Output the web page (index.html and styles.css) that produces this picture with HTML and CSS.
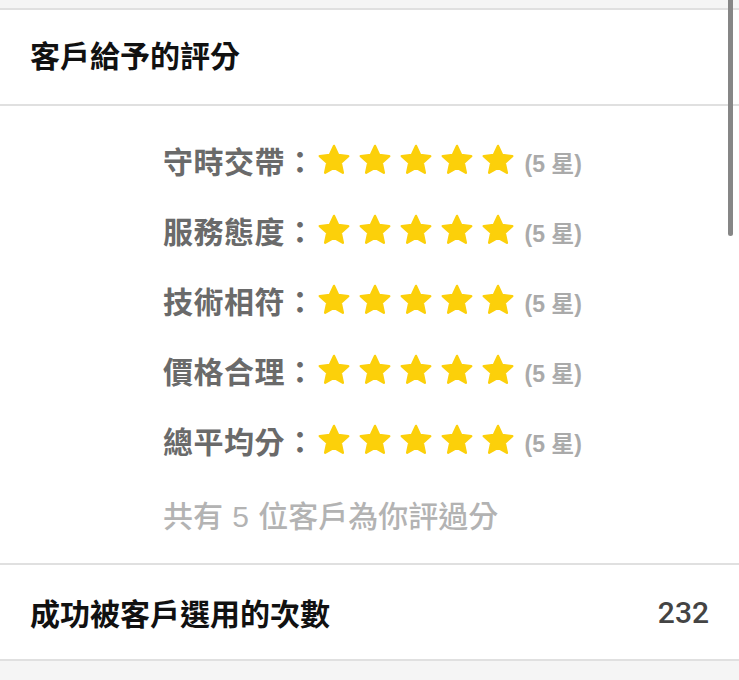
FILE: index.html
```html
<!DOCTYPE html>
<html lang="zh-Hant">

<head>
    <title>
        客戶評分
    </title>
    <link rel="stylesheet" href="styles.css">
</head>

<body>
    <div class="scrollbar"></div>

    <div class="section">
        <div class="section-title">客戶給予的評分</div>
        <div class="rating-body">
            <div class="rating-row">
                <span class="rating-label">守時交帶：</span>
                <span class="stars" data-stars="5"></span>
                <span class="rating-count">(5 星)</span>
            </div>
            <div class="rating-row">
                <span class="rating-label">服務態度：</span>
                <span class="stars" data-stars="5"></span>
                <span class="rating-count">(5 星)</span>
            </div>
            <div class="rating-row">
                <span class="rating-label">技術相符：</span>
                <span class="stars" data-stars="5"></span>
                <span class="rating-count">(5 星)</span>
            </div>
            <div class="rating-row">
                <span class="rating-label">價格合理：</span>
                <span class="stars" data-stars="5"></span>
                <span class="rating-count">(5 星)</span>
            </div>
            <div class="rating-row">
                <span class="rating-label">總平均分：</span>
                <span class="stars" data-stars="5"></span>
                <span class="rating-count">(5 星)</span>
            </div>
            <div class="rating-note">共有 5 位客戶為你評過分</div>
        </div>
    </div>

    <div class="section">
        <div class="stat-row">
            <span class="stat-label">成功被客戶選用的次數</span>
            <span class="stat-value">232</span>
        </div>
    </div>

    <script>
        var starSvg = '<svg class="star" viewBox="0 0 24 24"><path d="M12 2.6l2.8 6.1 6.7.7-5 4.5 1.4 6.6L12 17.1l-5.9 3.4 1.4-6.6-5-4.5 6.7-.7z"/></svg>';
        var lists = document.getElementsByClassName("stars");
        for (var i = 0; i < lists.length; i++) {
            var n = parseInt(lists[i].getAttribute("data-stars"));
            var html = "";
            for (var j = 0; j < n; j++) {
                html += starSvg;
            }
            lists[i].innerHTML = html;
        }
    </script>
</body>

</html>
```

FILE: styles.css
```css
body {
    margin: 0;
    padding-top: 8px;
    background-color: #f5f5f5;
    font-family: "Liberation Sans", "Noto Sans CJK TC", sans-serif;
    overflow: hidden;
}

.scrollbar {
    position: absolute;
    top: 0;
    left: 728px;
    width: 5px;
    height: 236px;
    border-radius: 0 0 3px 3px;
    background-color: #868686;
}

.section {
    background-color: #ffffff;
    border-top: 2px solid #e0e0e0;
    border-bottom: 2px solid #e0e0e0;
}

.section + .section {
    border-top: none;
}

.section-title {
    height: 94px;
    line-height: 94px;
    padding-left: 30px;
    font-size: 30px;
    font-weight: 700;
    color: #111111;
    border-bottom: 2px solid #e0e0e0;
}

.rating-body {
    padding: 19px 0 23px 163px;
}

.rating-row {
    display: flex;
    align-items: center;
    height: 70px;
}

.rating-label {
    font-family: "Noto Sans CJK TC", sans-serif;
    font-size: 30px;
    font-weight: 700;
    color: #6a6a6a;
    letter-spacing: 0.5px;
}

.stars {
    display: flex;
    gap: 5px;
    margin-left: 0;
}

.star {
    width: 36px;
    height: 36px;
    fill: #fcd00a;
    stroke: #fcd00a;
    stroke-width: 1.6;
    stroke-linejoin: round;
}

.rating-count {
    margin-left: 9px;
    padding-top: 4px;
    font-size: 23px;
    font-weight: 700;
    color: #aaaaaa;
}

.rating-note {
    margin-top: 19px;
    line-height: 46px;
    font-size: 30px;
    font-weight: 500;
    color: #b3b3b3;
    word-spacing: 1px;
}

.stat-row {
    display: flex;
    justify-content: space-between;
    align-items: center;
    height: 94px;
    padding: 0 30px;
}

.stat-label {
    font-size: 30px;
    font-weight: 700;
    color: #111111;
}

.stat-value {
    font-family: Roboto, "Liberation Sans", sans-serif;
    font-size: 30px;
    font-weight: 500;
    color: #444444;
}
```
